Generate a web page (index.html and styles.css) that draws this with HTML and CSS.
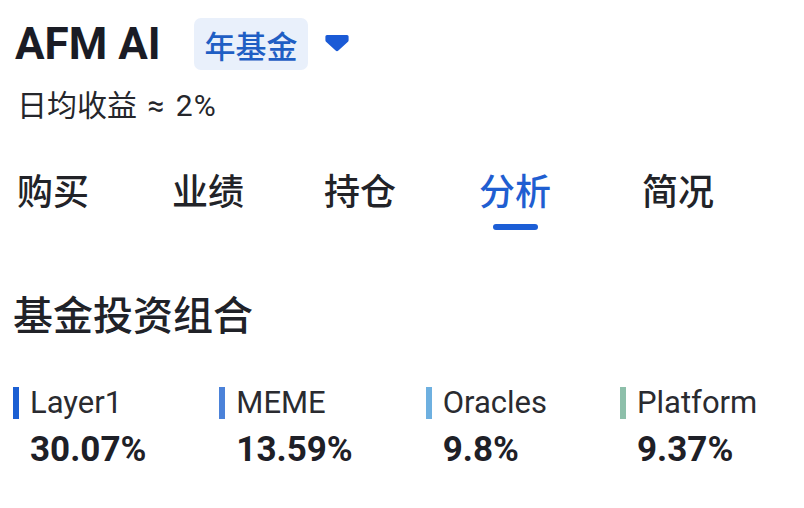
FILE: index.html
```html
<!DOCTYPE html>
<html lang="zh">
<head>
<meta charset="utf-8">
<link rel="stylesheet" href="styles.css">
</head>
<body>
<div class="page">
  <header class="title-row">
    <h1 class="title">AFM AI</h1>
    <span class="badge">年基金</span>
    <svg class="caret" width="24" height="18" viewBox="0 0 24 18"><path d="M2 1 H22 Q23.6 1 23.6 2.6 V6.2 Q23.6 7.3 22.7 8.1 L13.4 16.6 Q12 17.8 10.6 16.6 L1.3 8.1 Q0.4 7.3 0.4 6.2 V2.6 Q0.4 1 2 1 Z" fill="#1a5ad6"/></svg>
  </header>
  <p class="sub">日均收益<span class="sub-value"> ≈ 2%</span></p>
  <nav class="tabs">
    <div class="tab">购买</div>
    <div class="tab">业绩</div>
    <div class="tab">持仓</div>
    <div class="tab active">分析<span class="bar"></span></div>
    <div class="tab">简况</div>
  </nav>
  <h2 class="section">基金投资组合</h2>
  <div class="legend">
    <div class="item"><span class="mark c1"></span><div class="txt"><div class="label">Layer1</div><div class="value">30.07%</div></div></div>
    <div class="item"><span class="mark c2"></span><div class="txt"><div class="label">MEME</div><div class="value">13.59%</div></div></div>
    <div class="item"><span class="mark c3"></span><div class="txt"><div class="label">Oracles</div><div class="value">9.8%</div></div></div>
    <div class="item"><span class="mark c4"></span><div class="txt"><div class="label">Platform</div><div class="value">9.37%</div></div></div>
  </div>
</div>
</body>
</html>
```
FILE: styles.css
```css
* { box-sizing: border-box; }
html, body { margin: 0; padding: 0; background: #ffffff; }
body {
  font-family: Roboto, "Noto Sans CJK SC", sans-serif;
  color: #1f2128;
  width: 804px;
  height: 508px;
  overflow: hidden;
}
.page { padding: 18px 0 0 0; }
.title-row {
  display: flex;
  align-items: center;
  padding-left: 15px;
  height: 52px;
}
.title {
  margin: 0;
  font-size: 44px;
  font-weight: 700;
  line-height: 52px;
  color: #1a1c25;
}
.badge {
  margin-left: 33px;
  height: 52px;
  padding: 0 10px 0 11px;
  display: flex;
  align-items: center;
  background: #e9f0fb;
  border-radius: 7px;
  color: #1f5ec4;
  font-size: 31px;
  font-family: "Noto Sans CJK SC", sans-serif;
  font-weight: 500;
}
.caret { margin-left: 17px; margin-top: -3px; }
.sub {
  margin: 16px 0 0 17px;
  font-size: 30px;
  line-height: 40px;
  color: #25262b;
  font-family: Roboto, "Noto Sans CJK SC", sans-serif;
}
.sub-value { letter-spacing: 1px; word-spacing: 2px; }
.tabs {
  display: grid;
  grid-template-columns: 155px 152px 155px 163px auto;
  padding-left: 17px;
  margin-top: 41px;
  height: 63px;
}
.tab {
  display: flex;
  flex-direction: column;
  align-items: flex-start;
  font-size: 36px;
  line-height: 44px;
  font-family: "Noto Sans CJK SC", sans-serif;
  font-weight: 500;
  color: #222328;
}
.tab.active { color: #1f5ed1; align-items: center; width: 72px; }
.bar {
  margin-top: 13px;
  width: 45px;
  height: 6px;
  border-radius: 3px;
  background: #1c5ed6;
}
.section {
  margin: 58px 0 0 13px;
  font-size: 40px;
  line-height: 50px;
  font-weight: 500;
  font-family: "Noto Sans CJK SC", sans-serif;
  color: #202228;
}
.legend {
  display: flex;
  gap: 73px;
  padding-left: 13px;
  margin-top: 46px;
}
.item { display: flex; align-items: flex-start; }
.mark {
  width: 6px;
  height: 32px;
  margin-top: 3px;
  margin-right: 11px;
}
.c1 { background: #1b5fd3; }
.c2 { background: #4b82d9; }
.c3 { background: #6eb0e0; }
.c4 { background: #8dbfaa; }
.label {
  font-size: 31px;
  line-height: 38px;
  color: #2a2b30;
}
.value {
  font-size: 35px;
  line-height: 40px;
  font-weight: 700;
  color: #1e2027;
  margin-top: 8px;
}
```
